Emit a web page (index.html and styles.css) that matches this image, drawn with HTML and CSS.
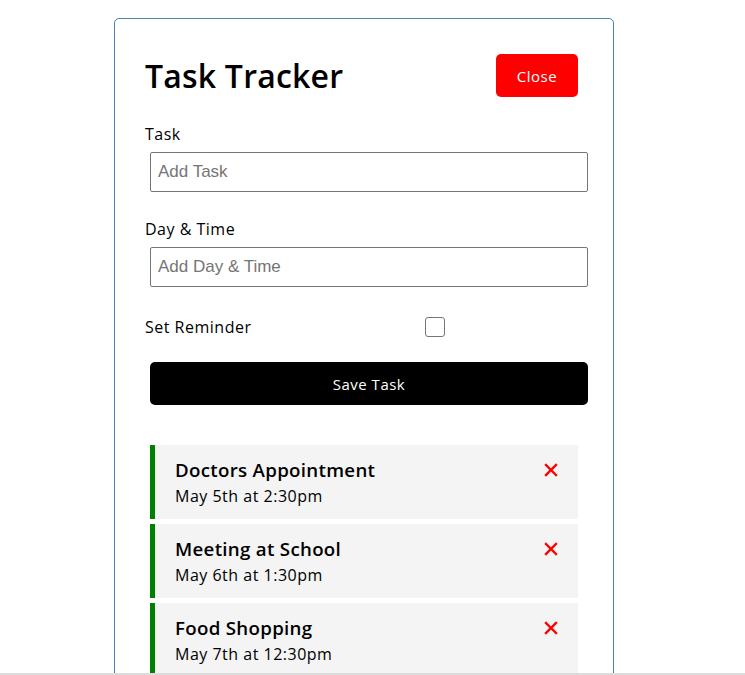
FILE: index.html
```html
<!DOCTYPE html>
<html lang="en">
<head>
<meta charset="utf-8">
<title>Task Tracker</title>
<link rel="stylesheet" href="styles.css">
</head>
<body>
<div class="container">
  <header class="header">
    <h1 class="title">Task Tracker</h1>
    <button class="btn btn-close">Close</button>
  </header>
  <form class="add-form">
    <div class="form-control">
      <label class="label">Task</label>
      <input class="field" type="text" placeholder="Add Task">
    </div>
    <div class="form-control">
      <label class="label">Day &amp; Time</label>
      <input class="field" type="text" placeholder="Add Day &amp; Time">
    </div>
    <div class="form-control form-control-check">
      <label class="label check-label">Set Reminder</label>
      <input class="check" type="checkbox">
    </div>
    <button type="button" class="btn btn-block">Save Task</button>
  </form>
  <div class="tasks">
    <div class="task reminder">
      <h3 class="task-title">Doctors Appointment <svg class="del" viewBox="0 0 14 14" width="14" height="14"><path d="M2 2 L12 12 M12 2 L2 12" stroke="#ff0000" stroke-width="2.4" stroke-linecap="square"/></svg></h3>
      <p class="task-day">May 5th at 2:30pm</p>
    </div>
    <div class="task reminder">
      <h3 class="task-title">Meeting at School <svg class="del" viewBox="0 0 14 14" width="14" height="14"><path d="M2 2 L12 12 M12 2 L2 12" stroke="#ff0000" stroke-width="2.4" stroke-linecap="square"/></svg></h3>
      <p class="task-day">May 6th at 1:30pm</p>
    </div>
    <div class="task reminder">
      <h3 class="task-title">Food Shopping <svg class="del" viewBox="0 0 14 14" width="14" height="14"><path d="M2 2 L12 12 M12 2 L2 12" stroke="#ff0000" stroke-width="2.4" stroke-linecap="square"/></svg></h3>
      <p class="task-day">May 7th at 12:30pm</p>
    </div>
  </div>
</div>
<div class="hbar"></div>
</body>
</html>
```
FILE: styles.css
```css
* { box-sizing: border-box; }
html, body { margin: 0; padding: 0; }
body {
  font-family: "Open Sans", "Noto Sans", sans-serif;
  background: #fff;
  color: #000;
}
.container {
  width: 500px;
  margin: 18px 0 30px 114px;
  border: 1px solid steelblue;
  border-radius: 5px;
  padding: 30px;
  min-height: 700px;
}
.header {
  display: flex;
  justify-content: space-between;
  align-items: center;
  margin-bottom: 20px;
}
.title {
  margin: 0;
  font-size: 32px;
  font-weight: 600;
  line-height: 40px;
  letter-spacing: 0.2px;
}
.btn {
  display: inline-block;
  background: #000;
  color: #fff;
  border: none;
  padding: 0 20px;
  height: 43px;
  margin: 5px;
  border-radius: 5px;
  font-size: 15px;
  letter-spacing: 0.5px;
  font-family: inherit;
}
.btn-close {
  background: #ff0000;
  width: 82px;
  padding: 0;
}
.btn-block {
  display: block;
  width: 438px;
  margin: 20px 5px 0;
}
.add-form {
  margin-bottom: 40px;
}
.form-control {
  display: flow-root;
  margin-bottom: 20px;
}
.label {
  display: block;
  font-size: 16px;
  line-height: 25px;
  letter-spacing: 0.5px;
}
.field {
  display: block;
  width: 438px;
  height: 40px;
  margin: 5px;
  padding: 3px 7px;
  font-size: 17px;
  font-family: "Liberation Sans", Arial, sans-serif;
  letter-spacing: 0;
  border: 1px solid #767676;
  border-radius: 2px;
}
.field::placeholder { color: #757575; }
.form-control-check {
  display: flex;
  align-items: center;
  height: 30px;
  margin: 0;
}
.check-label { width: 280px; }
.check {
  appearance: none;
  -webkit-appearance: none;
  width: 20px;
  height: 20px;
  margin: 0;
  border: 1px solid #767676;
  border-radius: 3px;
  background: #fff;
}
.tasks { display: flex; flex-direction: column; gap: 5px; margin: 0 5px; }
.task {
  background: #f4f4f4;
  padding: 10px 20px;
  width: 428px;
}
.task.reminder { border-left: 5px solid green; }
.task-title {
  margin: 0;
  display: flex;
  justify-content: space-between;
  align-items: center;
  font-size: 18.7px;
  font-weight: 600;
  line-height: 29px;
  letter-spacing: 0.3px;
}
.del { display: block; }
.task-day {
  margin: 0;
  font-size: 16px;
  line-height: 25px;
  letter-spacing: 0.5px;
}
.hbar {
  position: fixed;
  left: 0; right: 0; bottom: 0;
  height: 2px;
  background: #dcdcdc;
}
```
